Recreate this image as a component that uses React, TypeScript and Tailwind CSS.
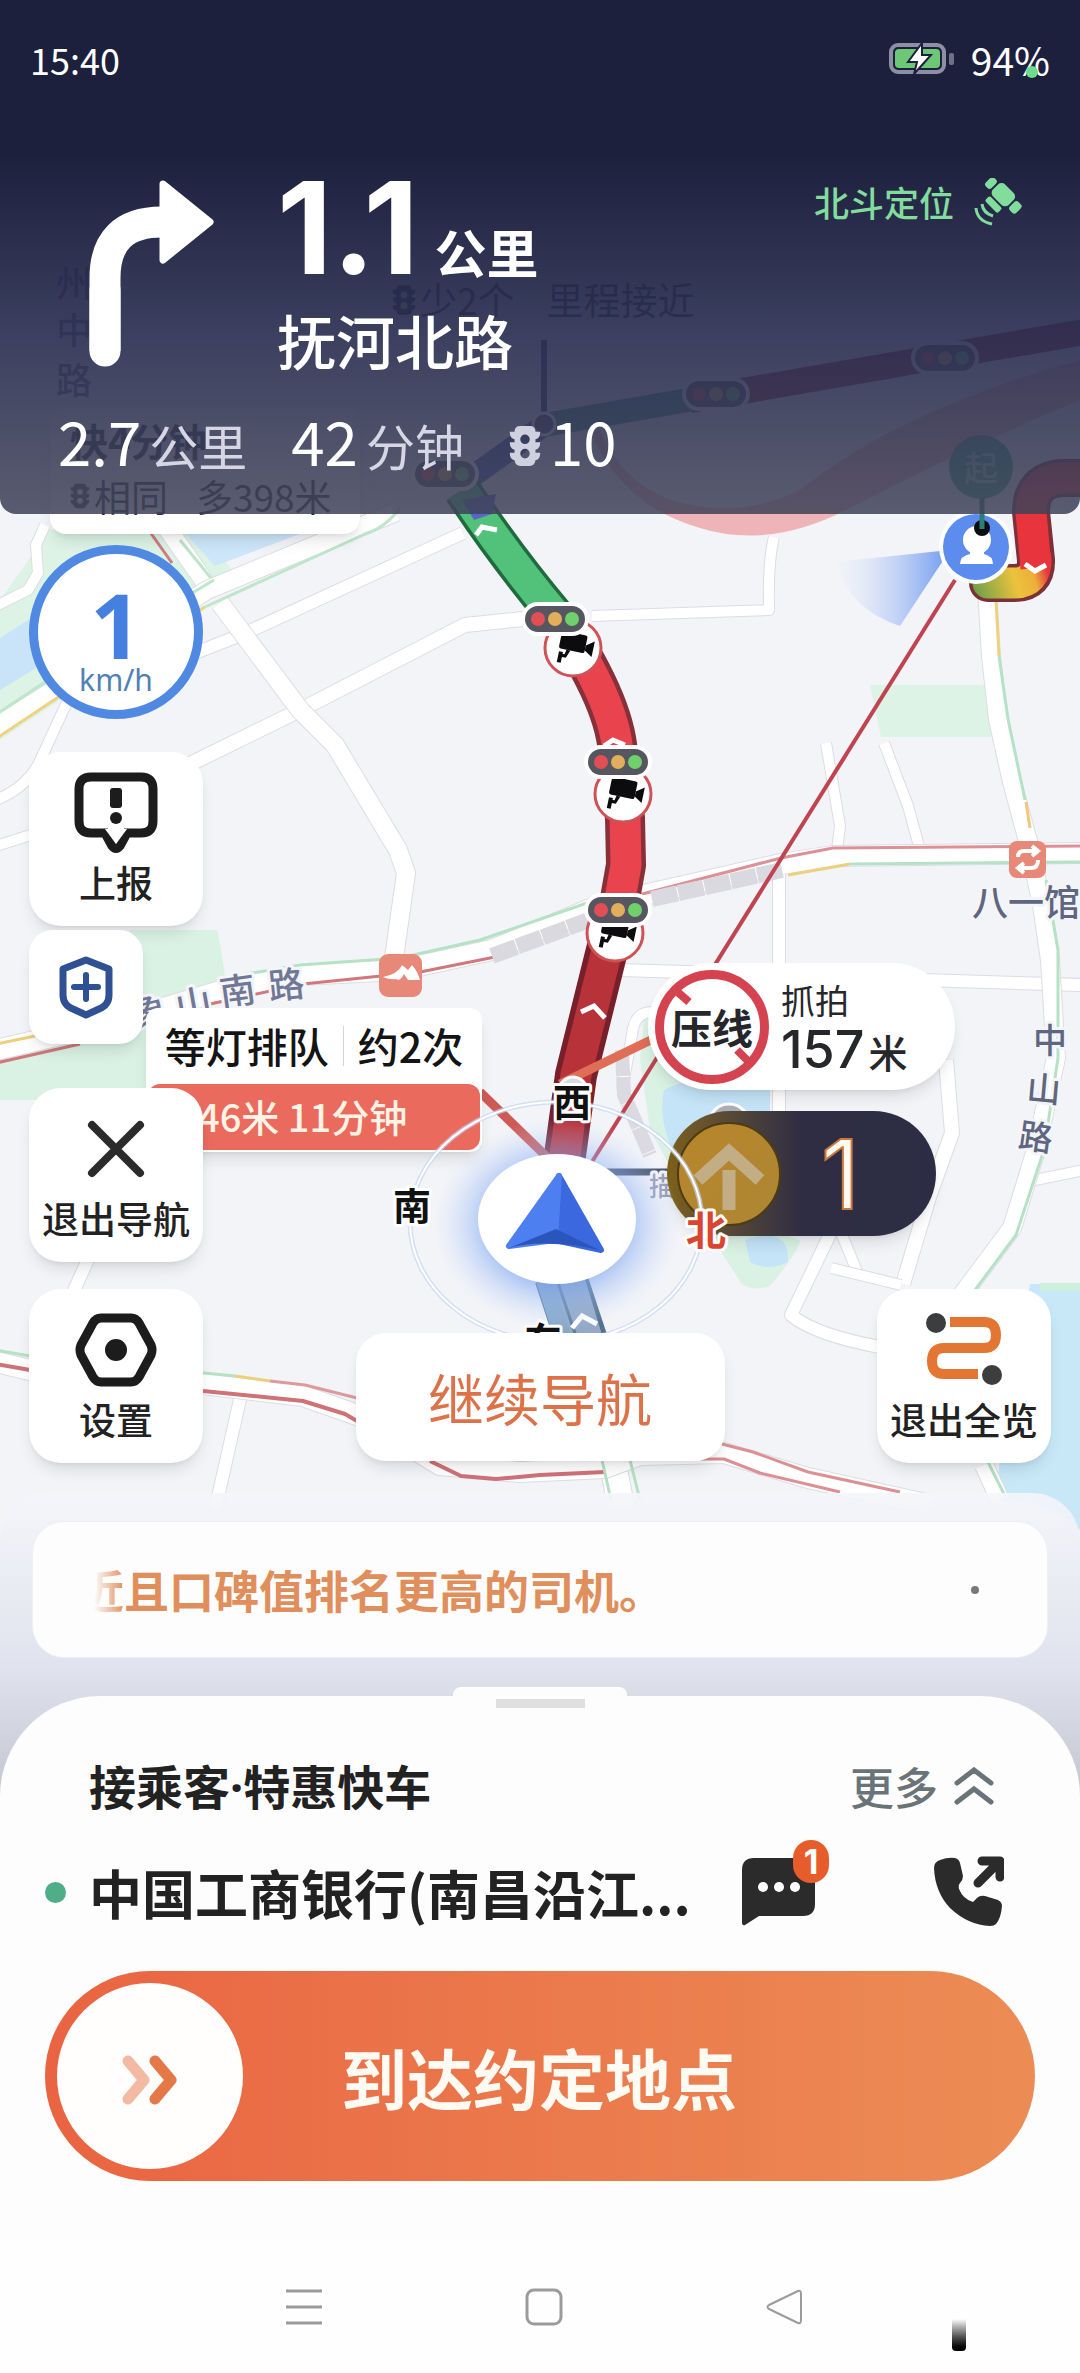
import type { ReactNode } from "react";

type RoadProps = { d: string; width?: number };

type StripeProps = { d: string; color: string; width?: number };

type PointProps = { x: number; y: number };

type LabelProps = {
  x: number;
  y: number;
  children: string;
  size?: number;
  fill?: string;
  halo?: string;
  weight?: number;
  rotate?: number;
};

type MapButtonProps = { label: string; children: ReactNode };

const SIDE_ROADS = [
  { d: "M463 533 L241 635 L190 655", width: 12 },
  { d: "M523 619 L465 625 L300 710 L190 764", width: 14 },
  { d: "M45 525 L36 545 L38 573 L28 590 L-4 606", width: 10 },
  { d: "M68 700 L38 765 Q25 788 -4 800", width: 10 },
  { d: "M40 832 L-4 846", width: 10 },
  { d: "M774 537 Q768 560 769 610 L592 616", width: 10 },
  { d: "M826 743 L840 826 L837 850", width: 10 },
  { d: "M884 743 L908 806 L920 850", width: 10 },
  { d: "M779 870 L779 1115", width: 12 },
  { d: "M620 970 L781 975 L953 981 L1084 985", width: 12 },
  { d: "M946 1060 L952 1133 L929 1197 L903 1284", width: 14 },
  { d: "M832 1230 L791 1315 Q815 1335 880 1347", width: 12 },
  { d: "M840 1230 L858 1274", width: 10 },
  { d: "M831 1268 L901 1285", width: 10 },
  { d: "M1030 1181 L1084 1170", width: 10 },
  { d: "M652 1012 Q634 1012 632 1035 L622 1090", width: 10 },
  { d: "M241 1395 L215 1510", width: 12 },
  { d: "M90 1255 L72 1295", width: 12 },
  { d: "M612 1460 L622 1510", width: 26 },
];

const LIGHT_COLORS = ["#e14f54", "#e3ae5c", "#6fd06c"];

// White carriageway over a slightly wider grey casing
function Road({ d, width = 12 }: RoadProps) {
  return (
    <g fill="none" strokeLinejoin="round">
      <path d={d} stroke="#dcdde3" strokeWidth={width + 2} />
      <path d={d} stroke="#ffffff" strokeWidth={width} />
    </g>
  );
}

function Stripe({ d, color, width = 3 }: StripeProps) {
  return <path d={d} fill="none" stroke={color} strokeWidth={width} strokeLinejoin="round" />;
}

function TrafficLight({ x, y }: PointProps) {
  return (
    <g transform={`translate(${x} ${y})`}>
      <rect x="-34" y="-17" width="68" height="34" rx="17" fill="#fff" />
      <rect x="-30" y="-13" width="60" height="26" rx="13" fill="#55565f" />
      {LIGHT_COLORS.map((color, index) => (
        <circle key={color} cx={-17 + index * 17} cy="0" r="7" fill={color} />
      ))}
    </g>
  );
}

function Camera({ x, y }: PointProps) {
  return (
    <g transform={`translate(${x} ${y})`}>
      <circle r="28" fill="#fff" stroke="#cf5257" strokeWidth="3" />
      <g fill="#0c0c0e" transform="rotate(12)">
        <path d="M-12 -15 H10 Q12 -15 12 -13 V1 Q12 3 10 3 H-12 Q-14 3 -14 1 V-13 Q-14 -15 -12 -15Z" />
        <path d="M12 -5 L20 -11 V5 L12 0Z" />
        <path d="M-2 3 L-5 11 H-9 V17 H-13 V6 H-9 V8 H-7 L-6 3Z" />
      </g>
    </g>
  );
}

function MapLabel({
  x,
  y,
  children,
  size = 36,
  fill = "#5f6680",
  halo = "#f4f5f9",
  weight = 500,
  rotate = 0,
}: LabelProps) {
  return (
    <text
      x={x}
      y={y}
      fontSize={size}
      fontWeight={weight}
      fill={fill}
      stroke={halo}
      strokeWidth="6"
      strokeLinejoin="round"
      paintOrder="stroke"
      textAnchor="middle"
      dominantBaseline="central"
      transform={`rotate(${rotate} ${x} ${y})`}
    >
      {children}
    </text>
  );
}

function BaseMap() {
  return (
    <svg className="h-full w-full" viewBox="0 0 1080 1600" preserveAspectRatio="xMidYMin slice" aria-label="路线地图">
      <defs>
        <linearGradient id="beam" x1="1" x2="0">
          <stop offset="0" stopColor="#6d98ef" />
          <stop offset="1" stopColor="#c9d8f8" stopOpacity="0" />
        </linearGradient>
        <linearGradient id="turn" gradientUnits="userSpaceOnUse" x1="972" y1="583" x2="1044" y2="560">
          <stop offset="0" stopColor="#6fa04a" />
          <stop offset="0.55" stopColor="#ecc23c" />
          <stop offset="0.8" stopColor="#ecb03c" />
          <stop offset="1" stopColor="#e8343c" />
        </linearGradient>
      </defs>
      <rect width="1080" height="1600" fill="#f3f4f8" />

      {/* parks and water */}
      <path d="M50 530 H200 L240 580 L0 740 V600Z" fill="#dcf3e6" />
      <path d="M0 638 L90 580 H180 L0 690Z" fill="#c9e3f8" />
      <path d="M182 530 H310 L215 566Z" fill="#cde6fa" />
      <path d="M130 930 H217 Q222 950 228 1000 L150 1030 V1100 H0 V1050 L130 1020Z" fill="#d9f2e4" />
      <path d="M870 685 H988 L996 737 H881Z" fill="#dcf3e6" />
      <path d="M645 1010 L700 1075 H770 V1230 L800 1240 Q800 1250 770 1286 Q755 1292 742 1284 L700 1220 L650 1130 L640 1060Z" fill="#d9f2e4" />
      <path d="M664 1090 Q700 1070 770 1085 V1180 H690 Q655 1130 664 1090Z" fill="#c5e4f8" />
      <path d="M745 1240 Q790 1225 788 1262 Q768 1272 750 1262Z" fill="#c5e4f8" />
      <path d="M1030 1284 H1080 V1530 Q1050 1500 995 1500 L1000 1460Z" fill="#c8e8f8" />
      <path d="M1040 1287 H1080" stroke="#cdf0dc" strokeWidth="8" />
      <path d="M590 430 Q620 505 700 528 Q770 550 850 508 Q960 450 1080 400 V360 Q900 410 800 490 Q740 520 670 500 Q620 480 600 430Z" fill="#eeb4b8" />

      {/* side roads */}
      {SIDE_ROADS.map((road) => (
        <Road key={road.d} d={road.d} width={road.width} />
      ))}
      <Road d="M165 525 L207 585 M220 603 L300 710 L335 745 L398 850 L406 873 L394 958" width={18} />
      <Stripe d="M150 532 L172 563" color="#d27a7e" />
      <Stripe d="M180 540 L215 583" color="#bfe5cb" />
      <Road d="M396 512 L207 590 L70 680 L-6 728" width={18} />
      <Stripe d="M400 508 Q385 528 365 534 L205 607" color="#bde6cb" />
      <Stripe d="M205 607 L60 696 L-6 740" color="#f0d27e" />
      <Stripe d="M214 580 L60 672 L-6 716" color="#bde6cb" />

      {/* main east-west road */}
      <Road d="M-4 1050 L60 1035 L150 1012 L230 988 L300 975 L400 970 L492 950 L600 905 L781 864 L833 856 L1084 853" width={20} />
      <Stripe d="M240 975 L300 965 L400 958 L480 940 L610 895" color="#b5e2c4" />
      <Stripe d="M-4 1063 L80 1044 M210 1004 L303 984 L420 972 L495 957" color="#d0787c" />
      <Stripe d="M600 905 L781 858 L833 848 L1084 846" color="#dd9096" />
      <Stripe d="M788 875 L850 864" color="#ecd07c" />
      <Stripe d="M850 864 L1084 862" color="#b5e2c4" />
      <Stripe d="M-4 1044 L35 1036" color="#ecd07c" />
      <g strokeDasharray="26 1">
        <Stripe d="M492 956 L600 916" color="#d9d9df" width={16} />
        <Stripe d="M652 899 L782 870" color="#d9d9df" width={16} />
        <Stripe d="M622 1050 L624 1095 L650 1155" color="#dadae0" width={14} />
      </g>

      {/* 中山路 */}
      <Road d="M987 590 L991 656 L998 719 L1012 782 L1029 845 L1042 905 L1050 960 L1056 1058 L1036 1150 L1012 1228 L962 1295 M984 1465 L1000 1500" width={18} />
      <Stripe d="M996 600 L999 656" color="#efd27e" />
      <Stripe d="M999 656 L1008 719 L1025 800 M1046 880 L1058 950 L1058 1058 L1044 1150 L1016 1235 L975 1290 M988 1462 L1005 1496" color="#b5e2c4" />
      <Stripe d="M1026 802 L1030 828" color="#efc77e" />

      {/* southern ring road */}
      <Road d="M-4 1362 L30 1370 L203 1384 L303 1396 L360 1416 L440 1465 L520 1472 L605 1468 L640 1455 L724 1453 L808 1478 L930 1505" width={20} />
      <Stripe d="M-4 1350 L30 1356 L235 1376" color="#b5e2c4" />
      <Stripe d="M235 1376 L270 1381" color="#ecd07c" />
      <Stripe d="M270 1381 L305 1385 L357 1398" color="#dd9a9c" />
      <Stripe d="M-4 1364 L30 1370 M203 1391 L303 1401 L345 1414 L357 1421 M430 1461 L461 1476 L496 1479 L540 1475 L605 1472" color="#cf7277" width={4} />
      <Stripe d="M700 1459 L724 1459 L760 1473 L840 1492 M722 1444 L753 1452 L808 1472 L900 1492" color="#dd8f94" />
      <Stripe d="M602 1460 L611 1500 M630 1460 L640 1500" color="#b5e2c4" />

      {/* far part of the route */}
      <Stripe d="M544 340 V420" color="#2d3268" width={6} />
      <Stripe d="M690 400 L1084 332" color="#8e1f35" width={26} />
      <Stripe d="M544 425 L700 398" color="#3f8a80" width={24} />
      <Stripe d="M546 424 L470 478" color="#3c56b0" width={22} />
      <TrafficLight x={716} y={394} />
      <TrafficLight x={945} y={358} />
      <circle cx="544" cy="424" r="11" fill="#4b4e66" stroke="#fff" strokeWidth="3" />

      {/* congested stretch ahead */}
      <g fill="none" strokeLinejoin="round">
        <path d="M462 490 Q505 555 556 616" stroke="#1f6b3d" strokeWidth="38" />
        <path d="M462 490 Q505 555 556 616" stroke="#52c27b" strokeWidth="31" />
        <path d="M560 620 Q620 710 618 762 L625 818 L626 865 L618 910" stroke="#87303a" strokeWidth="40" />
        <path d="M560 620 Q620 710 618 762 L625 818 L626 865 L618 910" stroke="#e9434d" strokeWidth="31" />
        <path d="M612 930 L576 1075 L563 1170" stroke="#77202c" strokeWidth="42" />
        <path d="M612 930 L576 1075 L563 1170" stroke="#b8323a" strokeWidth="31" />
        <path d="M560 1275 L588 1360" stroke="#54718f" strokeWidth="52" />
        <path d="M557 1275 L584 1360" stroke="#86a8c9" strokeWidth="44" />
        <path d="M568 1275 L594 1360" stroke="#93a9c5" strokeWidth="30" />
        <path d="M557 1280 L584 1360" stroke="#5d7f9f" strokeWidth="3" />
        <path d="M1084 478 H1062 Q1031 480 1031 512 L1036 560 Q1037 583 1014 583 H988" stroke="#7a3138" strokeWidth="38" strokeLinecap="round" />
        <path d="M1036 558 Q1037 583 1014 583 H988" stroke="url(#turn)" strokeWidth="31" strokeLinecap="round" />
        <path d="M1084 478 H1062 Q1031 480 1031 512 L1036 568" stroke="#e8343c" strokeWidth="31" />
      </g>
      <g fill="none" stroke="#fff" strokeWidth="5" strokeLinejoin="miter">
        <path d="M476 535 L482 527 L497 530" />
        <path d="M604 746 L613 740 L625 745" />
        <path d="M581 1012 L594 1006 L605 1018" />
        <path d="M572 1328 L582 1316 L597 1324" />
        <path d="M1025 564 L1035 571 L1046 565" />
      </g>
      <TrafficLight x={445} y={474} />
      <path d="M462 500 L496 494 L492 514 L474 520Z" fill="#5866c8" />

      <path d="M560 1084 L655 1038" stroke="#e06d55" strokeWidth="9" />
      <path d="M480 1092 L550 1160" stroke="#cf5a55" strokeWidth="9" />
      <path d="M600 1172 H680" stroke="#4b5570" strokeWidth="7" />
      <path d="M955 580 L590 1165" stroke="#c04450" strokeWidth="4" />
      <circle cx="573" cy="1091" r="14" fill="#d8dbe4" stroke="#fff" strokeWidth="3" />
      <circle cx="729" cy="1124" r="20" fill="#a9aeb9" stroke="#fff" strokeWidth="3" />

      <Camera x={573} y={648} />
      <Camera x={623} y={794} />
      <Camera x={615} y={933} />
      <TrafficLight x={555} y={619} />
      <TrafficLight x={618} y={762} />
      <TrafficLight x={618} y={910} />

      {/* passenger */}
      <path d="M950 550 L835 562 Q850 610 900 626Z" fill="url(#beam)" />
      <circle cx="981" cy="467" r="32" fill="#3fa58c" />
      <MapLabel x={981} y={466} size={34} fill="#9fd3c4" halo="#3fa58c">
        起
      </MapLabel>
      <circle cx="976" cy="547" r="37" fill="#fff" />
      <circle cx="976" cy="547" r="33" fill="#5b8cee" />
      <circle cx="977" cy="540" r="14" fill="#fff" />
      <path d="M970 548 H984 V554 Q993 556 993 564 H960 Q960 556 970 554Z" fill="#fff" />
      <circle cx="982" cy="528" r="8" fill="#0c0d10" />
      <path d="M982 498 V529" stroke="#2c7f77" strokeWidth="5" />

      {/* places and street names */}
      <rect x="379" y="954" width="43" height="43" rx="9" fill="#e88878" />
      <path d="M383 977 Q398 974 402 965 L408 970 L412 965 Q418 972 420 980 H408 L404 974 Q400 982 396 979 Q390 980 383 977Z" fill="#fff" />
      <rect x="1009" y="841" width="37" height="37" rx="8" fill="#e88878" />
      <path d="M1018 857 Q1018 851 1024 851 H1036 M1032 846 L1038 851 L1032 856 M1038 860 Q1038 868 1031 868 H1019 M1024 863 L1018 868 L1024 873" fill="none" stroke="#fff" strokeWidth="4" />
      <MapLabel x={1026} y={900}>八一馆</MapLabel>
      <MapLabel x={1050} y={1038} size={34}>中</MapLabel>
      <MapLabel x={1044} y={1087} size={34} rotate={5}>山</MapLabel>
      <MapLabel x={1036} y={1135} size={34} rotate={8}>路</MapLabel>
      <MapLabel x={148} y={1009} rotate={-14} fill="#707896">象</MapLabel>
      <MapLabel x={193} y={1001} rotate={-10} fill="#707896">山</MapLabel>
      <MapLabel x={237} y={988} rotate={-8} fill="#707896">南</MapLabel>
      <MapLabel x={286} y={982} rotate={-6} fill="#707896">路</MapLabel>
      <MapLabel x={662} y={1184} size={26} fill="#9a9db5">描</MapLabel>
      <MapLabel x={74} y={281}>州</MapLabel>
      <MapLabel x={74} y={328}>中</MapLabel>
      <MapLabel x={74} y={378}>路</MapLabel>
    </svg>
  );
}

function Compass() {
  return (
    <svg className="h-full w-full" viewBox="0 0 1080 1600" preserveAspectRatio="xMidYMin slice" aria-label="指南针">
      <defs>
        <radialGradient id="halo">
          <stop offset="0.5" stopColor="#6f9cf0" stopOpacity="0.7" />
          <stop offset="1" stopColor="#c7d9fa" stopOpacity="0" />
        </radialGradient>
      </defs>
      <ellipse cx="557" cy="1224" rx="124" ry="106" fill="url(#halo)" />
      <ellipse cx="556" cy="1222" rx="146" ry="120" fill="none" stroke="#c3d6f3" strokeWidth="5" opacity="0.7" />
      <ellipse cx="556" cy="1222" rx="146" ry="120" fill="none" stroke="#fff" strokeWidth="2" />
      <ellipse cx="557" cy="1219" rx="79" ry="65" fill="#fff" />
      <g strokeLinejoin="round" strokeWidth="6">
        <path d="M559 1176 L601 1250 L555 1240Z" fill="#3b68de" stroke="#3b68de" />
        <path d="M559 1176 L509 1246 L555 1240Z" fill="#4d7ff0" stroke="#4d7ff0" />
      </g>
      <path d="M556 1229 L601 1251 Q578 1244 554 1244 Q530 1242 509 1248Z" fill="#2a55bd" />
      <MapLabel x={572} y={1099} size={38} weight={700} fill="#111" halo="#fff">西</MapLabel>
      <MapLabel x={412} y={1203} size={38} weight={700} fill="#111" halo="#fff">南</MapLabel>
      <MapLabel x={543} y={1338} size={38} weight={700} fill="#111" halo="#fff">东</MapLabel>
      <MapLabel x={706} y={1228} size={40} weight={700} fill="#d9452f" halo="#fff">北</MapLabel>
    </svg>
  );
}

function SignalIcon({ className }: { className?: string }) {
  return (
    <svg className={className} viewBox="0 0 34 42" fill="currentColor" aria-hidden="true">
      <path
        fillRule="evenodd"
        d="M12 0 H22 Q28 0 28 6 H33 Q33 13 28 14 V17 H33 Q33 24 28 25 V28 H33 Q33 35 28 36 Q27 42 22 42 H12 Q7 42 6 36 Q1 35 1 28 H6 V25 Q1 24 1 17 H6 V14 Q1 13 1 6 H6 Q6 0 12 0Z M17 9 A5 5 0 1 0 17 19 A5 5 0 1 0 17 9Z M17 24 A5 5 0 1 0 17 34 A5 5 0 1 0 17 24Z"
      />
    </svg>
  );
}

function RouteNotes() {
  return (
    <>
      <div className="absolute top-[408px] left-[50px] w-[310px] rounded-2xl bg-white pt-1 pb-2.5 pl-5 text-[#2b2d3a] shadow-lg">
        <p className="text-[38px] leading-[56px] font-bold">快4分钟</p>
        <p className="flex items-center text-[37px] leading-[56px]">
          <SignalIcon className="mr-1 h-9 w-5 text-[#4a4a52]" />
          相同<span className="ml-7">多398米</span>
        </p>
      </div>
      <div className="absolute top-[272px] left-[392px] flex h-14 items-center text-[37px] text-[#2b2d3a]">
        <SignalIcon className="mr-1 h-9 w-6 text-[#2b2d3a]" />
        少2个<span className="ml-8">里程接近</span>
      </div>
    </>
  );
}

function MapPins() {
  return (
    <>
      <div className="absolute top-[1008px] left-[146px] w-[336px] rounded-xl bg-white shadow-lg">
        <p className="flex h-[76px] items-center justify-center text-[41px] font-medium text-[#141414]">
          等灯排队
          <span className="mx-3.5 h-10 w-px bg-gray-300" />
          约2次
        </p>
        <p className="mx-0.5 mb-0.5 h-[66px] rounded-xl bg-[#ea6a5e] pl-[50px] text-[38px] leading-[64px] font-medium text-[#fff3e6]">
          46米 11分钟
        </p>
      </div>

      <div className="absolute top-[963px] left-[648px] flex h-[127px] w-[307px] items-center rounded-full bg-white pl-[7px] shadow-lg">
        <div className="flex size-[114px] items-center justify-center rounded-full border-[9px] border-[#d4434f] text-[41px] font-bold text-[#26272b]">
          <svg className="absolute left-[7px] size-[114px]" viewBox="0 0 114 114" stroke="#d4434f" strokeWidth="8" aria-hidden="true">
            <path d="M18 18 L34 32 M82 80 L97 95" />
          </svg>
          <span className="relative whitespace-nowrap">压线</span>
        </div>
        <div className="ml-3 text-[#26272b]">
          <p className="text-[34px] leading-[48px]">抓拍</p>
          <p className="flex items-baseline gap-1 text-[39px] leading-[52px] font-medium">
            <span className="font-[Inter] text-[52px]">157</span>米
          </p>
        </div>
      </div>

      <div className="absolute top-[1111px] left-[667px] flex h-[125px] w-[269px] items-center rounded-full bg-linear-to-r from-[#7d6016] via-[#2f2d42] via-50% to-[#2c2d45] pl-2.5 shadow-lg">
        <div className="flex size-[104px] items-center justify-center rounded-full border-2 border-[#4d3b12] bg-linear-to-br from-[#b8862a] to-[#ad8634]">
          <svg className="size-[72px]" viewBox="0 0 72 72" fill="none" stroke="#c3ad85" strokeWidth="13" aria-hidden="true">
            <path d="M5 42 L36 14 L67 42 M36 32 V72" />
          </svg>
        </div>
        <span className="ml-10 font-[Inter] text-[96px] leading-none text-[#fffaf0] [-webkit-text-stroke:2px_#c9783f]">1</span>
      </div>
    </>
  );
}

function StatusBar() {
  return (
    <div className="flex h-[118px] items-center justify-between px-[30px] text-[36px]">
      <span>15:40</span>
      <div className="relative flex items-center gap-4 text-[39px]">
        <svg className="h-[32px] w-[66px]" viewBox="0 0 66 32" aria-label="充电中">
          <rect x="2" y="2" width="53" height="27" rx="7" fill="none" stroke="#8d8fa6" strokeWidth="4" />
          <rect x="6" y="6" width="45" height="19" rx="4" fill="#6cc874" />
          <rect x="60" y="10" width="5" height="12" rx="2" fill="#6f7188" />
          <path d="M33 0 L19 19 H28 L25 31 L42 12 H33Z" fill="#fff" stroke="#1d213e" strokeWidth="2" />
        </svg>
        <span>94%</span>
        <span className="absolute right-3 bottom-2.5 size-3 rounded-full bg-[#6fdc8c]" />
      </div>
    </div>
  );
}

function GuidanceHeader() {
  return (
    <header className="relative h-[514px] rounded-b-2xl bg-linear-to-b from-[#1c203d] from-30% via-[#2c3052]/92 via-65% to-[#404359]/86 text-white">
      <StatusBar />
      <div className="flex items-start px-[58px] pt-[52px]">
        <svg className="mt-2 h-[192px] w-[160px]" viewBox="58 178 160 192" fill="none" aria-label="右转">
          <path d="M105 351 V278 Q105 222 162 222" stroke="#fff" strokeWidth="31" />
          <path d="M105 290 V351" stroke="#fff" strokeWidth="31" strokeLinecap="round" />
          <path d="M163 184 L210 222 L163 260Z" fill="#fff" stroke="#fff" strokeWidth="7" strokeLinejoin="round" />
        </svg>
        <div className="ml-[59px] flex-1">
          <p className="flex items-baseline gap-4 text-[52px] leading-[116px] font-bold">
            <span className="font-[Inter] text-[128px]">1.1</span>公里
          </p>
          <p className="text-[59px] leading-[60px] font-medium">抚河北路</p>
        </div>
        <p className="mt-1.5 flex items-center gap-5 text-[35px] font-medium text-[#82dc9c]">
          北斗定位
          <svg className="size-[48px]" viewBox="0 0 48 48" fill="currentColor" aria-hidden="true">
            <g transform="rotate(45 29 17)">
              <rect x="18" y="8" width="22" height="17" rx="5" />
              <rect x="8" y="11" width="8" height="12" rx="3" />
              <rect x="42" y="11" width="9" height="12" rx="3" />
              <rect x="20" y="27" width="18" height="7" rx="2" />
            </g>
            <path d="M8 26 Q9 35 19 38 M2 30 Q3 43 18 46" fill="none" stroke="currentColor" strokeWidth="3" />
          </svg>
        </p>
      </div>
      <p className="flex items-baseline px-[58px] pt-7 text-[49px] leading-[84px] text-[#d6d6e4]">
        <span className="mr-2 text-[60px] text-white">2.7</span>公里
        <span className="mr-2 ml-11 text-[60px] text-white">42</span>分钟
        <SignalIcon className="ml-11 h-10 w-[34px] text-[#d0d1de]" />
        <span className="ml-2 text-[60px] text-white">10</span>
      </p>
    </header>
  );
}

function MapButton({ label, children }: MapButtonProps) {
  return (
    <button
      type="button"
      className="flex size-[174px] flex-col items-center justify-between rounded-[32px] bg-white pt-5 pb-[18px] text-[37px] leading-[52px] font-medium text-[#222] shadow-lg"
    >
      {children}
      {label}
    </button>
  );
}

function MapControls() {
  return (
    <div className="relative flex items-end justify-between px-[29px] pt-[31px] pb-[30px]">
      <div className="flex flex-col">
        <div className="flex size-[174px] flex-col items-center rounded-full border-[9px] border-[#5089e2] bg-white pt-8">
          <span className="font-['Open_Sans'] text-[90px] leading-[76px] font-bold text-[#4580e0]">1</span>
          <span className="font-['Noto_Sans'] text-[30px] leading-9 text-[#4f80b8]">km/h</span>
        </div>
        <div className="mt-[33px]">
          <MapButton label="上报">
            <svg className="h-[82px] w-[84px]" viewBox="0 0 84 82" fill="none" aria-hidden="true">
              <path
                d="M17 5 H67 Q79 5 79 17 V49 Q79 61 67 61 H53 L46 74 Q42 79 38 74 L31 61 H17 Q5 61 5 49 V17 Q5 5 17 5Z"
                stroke="#1c1c1c"
                strokeWidth="9"
              />
              <path d="M31 57 H53 L42 72Z" fill="#fff" />
              <rect x="36" y="16" width="12" height="20" rx="3" fill="#1c1c1c" />
              <circle cx="42" cy="46" r="6" fill="#1c1c1c" />
            </svg>
          </MapButton>
        </div>
        <button
          type="button"
          aria-label="安全中心"
          className="mt-1 flex size-[114px] items-center justify-center rounded-3xl bg-white shadow-lg"
        >
          <svg className="h-[64px] w-[56px]" viewBox="0 0 56 64" fill="none" stroke="#2f5193" aria-hidden="true">
            <path d="M28 5 L51 14 V40 Q51 50 41 54 L28 60 L15 54 Q5 50 5 40 V14Z" strokeWidth="7" strokeLinejoin="round" />
            <path d="M28 20 V44 M16 32 H40" strokeWidth="6" strokeLinecap="round" />
          </svg>
        </button>
        <div className="mt-11">
          <MapButton label="退出导航">
            <svg className="mt-3 h-[58px] w-[58px]" viewBox="0 0 58 58" stroke="#2b2b2b" strokeWidth="8" strokeLinecap="round" aria-hidden="true">
              <path d="M5 5 L53 53 M53 5 L5 53" />
            </svg>
          </MapButton>
        </div>
        <div className="mt-[27px]">
          <MapButton label="设置">
            <svg className="mt-1 h-[74px] w-[82px]" viewBox="0 0 82 74" fill="none" aria-hidden="true">
              <path
                d="M26 5 H56 Q61 5 64 10 L76 32 Q78 37 76 42 L64 64 Q61 69 56 69 H26 Q21 69 18 64 L6 42 Q4 37 6 32 L18 10 Q21 5 26 5Z"
                stroke="#1c1c1c"
                strokeWidth="9"
              />
              <circle cx="41" cy="37" r="11" fill="#1c1c1c" />
            </svg>
          </MapButton>
        </div>
      </div>
      <button type="button" className="mb-0.5 h-[128px] w-[369px] rounded-[30px] bg-white text-[56px] text-[#dd7249] shadow-lg">
        继续导航
      </button>
      <MapButton label="退出全览">
        <svg className="mt-1 h-[72px] w-[76px]" viewBox="0 0 76 72" fill="none" aria-hidden="true">
          <path d="M24 9 H58 Q70 9 70 22 Q70 35 58 35 H18 Q6 35 6 48 Q6 61 18 61 H52" stroke="#e27632" strokeWidth="10" />
          <circle cx="10" cy="10" r="10" fill="#3b3d3f" />
          <circle cx="66" cy="62" r="10" fill="#3b3d3f" />
        </svg>
      </MapButton>
    </div>
  );
}

function Ticker() {
  return (
    <div className="mx-8 flex h-[137px] items-center justify-between rounded-[32px] border border-[#eef0f4] bg-[#fdfdfd] pr-[68px] pl-[61px]">
      <p className="flex overflow-hidden text-[45px] font-bold whitespace-nowrap text-[#e08f5c]">
        <span className="flex w-[30px] justify-end overflow-hidden mask-l-from-0%">近</span>
        且口碑值排名更高的司机。
      </p>
      <span className="size-2 rounded-full bg-[#77797d]" />
    </div>
  );
}

function OrderSheet() {
  return (
    <>
      <div className="mx-auto mt-[29px] h-[9px] w-[174px] rounded-t-lg bg-[#fdfdfd]" />
      <div className="rounded-t-[100px] bg-[#fdfdfd] pb-[59px]">
        <div className="mx-auto h-3 w-[89px] border-b-[9px] border-[#dfdfdf]" />
        <div className="mt-11 flex h-[68px] items-center justify-between pr-[86px] pl-[89px]">
          <h2 className="text-[47px] font-bold text-[#222]">
            接乘客<span className="font-['Noto_Sans']">·</span>特惠快车
          </h2>
          <button type="button" className="flex items-center gap-4 text-[44px] font-medium text-[#6a7478]">
            更多
            <svg className="h-[38px] w-[40px]" viewBox="0 0 40 38" fill="none" stroke="currentColor" strokeWidth="5" strokeLinecap="round" aria-hidden="true">
              <path d="M3 16 L20 3 L37 16 M3 35 L20 22 L37 35" />
            </svg>
          </button>
        </div>
        <div className="mt-8 flex h-[80px] items-center pr-[76px] pl-[45px]">
          <span className="size-[21px] shrink-0 rounded-full bg-[#4fae88]" />
          <p className="ml-[23px] min-w-0 flex-1 text-[53px] leading-[80px] font-bold whitespace-nowrap text-[#222]">
            中国工商银行(南昌沿江...
          </p>
          <button type="button" aria-label="消息" className="relative">
            <svg className="h-[68px] w-[76px]" viewBox="0 0 76 68" fill="#2b2b2b" aria-hidden="true">
              <path d="M13 0 H62 Q74 0 74 12 V46 Q74 58 62 58 H18 L4 67 Q1 68 1 64 V12 Q1 0 13 0Z" />
              <g fill="#fff">
                <circle cx="22" cy="29" r="5" />
                <circle cx="38" cy="29" r="5" />
                <circle cx="54" cy="29" r="5" />
              </g>
            </svg>
            <span className="absolute -top-[18px] -right-3 flex h-[43px] w-[36px] items-center justify-center rounded-full bg-[#e65c2b] font-[Inter] text-[34px] font-bold text-white">
              1
            </span>
          </button>
          <button type="button" aria-label="电话" className="ml-[115px]">
            <svg className="h-[72px] w-[72px]" viewBox="0 0 72 72" fill="#2b2b2b" aria-hidden="true">
              <path d="M8 4 Q16 1 23 2 Q27 3 28 7 L31 20 Q31 24 28 27 Q26 29 27 33 Q31 43 41 46 L45 42 Q48 39 53 40 L66 44 Q70 46 70 50 Q69 62 64 68 Q62 70 58 70 Q36 69 18 52 Q3 36 2 12 Q2 6 8 4Z" />
              <path d="M46 27 L65 8 M50 5 H68 V21" fill="none" stroke="#2b2b2b" strokeWidth="9" strokeLinecap="round" strokeLinejoin="round" />
            </svg>
          </button>
        </div>
        <div className="mx-[45px] mt-[39px]">
          <button
            type="button"
            className="flex h-[210px] w-full items-center rounded-full bg-linear-to-r from-[#e96442] to-[#ec8c55] pl-3 text-[66px] font-bold text-[#fffaf2]"
          >
            <span className="flex size-[186px] items-center justify-center rounded-full bg-[#fffefd]">
              <svg className="mt-2 h-[50px] w-[56px]" viewBox="0 0 56 50" fill="none" strokeWidth="11" strokeLinecap="round" strokeLinejoin="round" aria-hidden="true">
                <path d="M6 6 L22 25 L6 44" stroke="#f3b9a2" />
                <path d="M33 6 L49 25 L33 44" stroke="#e57848" />
              </svg>
            </span>
            <span className="ml-[98px]">到达约定地点</span>
          </button>
        </div>
      </div>
    </>
  );
}

function SystemNav() {
  return (
    <nav className="relative flex h-[133px] justify-center gap-[202px] bg-[#fefefe] pt-12 pl-2">
      <button type="button" aria-label="最近任务" className="h-10 w-[38px]">
        <svg viewBox="0 0 38 40" stroke="#9b9b9b" strokeWidth="3" aria-hidden="true">
          <path d="M1 3 H37 M1 19 H37 M1 35 H37" />
        </svg>
      </button>
      <button type="button" aria-label="主屏幕" className="h-10 w-[38px]">
        <svg viewBox="0 0 38 40" fill="none" stroke="#9b9b9b" strokeWidth="3" aria-hidden="true">
          <rect x="2" y="2" width="34" height="34" rx="7" />
        </svg>
      </button>
      <button type="button" aria-label="返回" className="h-10 w-[38px]">
        <svg viewBox="0 0 38 40" fill="none" stroke="#9b9b9b" strokeWidth="2" strokeLinejoin="round" aria-hidden="true">
          <path d="M33 3 Q36 2 36 6 V32 Q36 36 33 35 L4 21 Q1 19 4 17Z" />
        </svg>
      </button>
      <span className="absolute right-[114px] bottom-[22px] h-8 w-3.5 rounded-b bg-linear-to-b from-white to-black" />
    </nav>
  );
}

export default function App() {
  return (
    <main className="relative min-h-screen overflow-hidden bg-[#fefefe] font-['Noto_Sans_CJK_SC',sans-serif]">
      <div className="absolute inset-x-0 top-0 h-[1600px]">
        <BaseMap />
        <RouteNotes />
        <MapPins />
        <div className="absolute inset-0">
          <Compass />
        </div>
      </div>
      <GuidanceHeader />
      <MapControls />
      <section className="relative rounded-t-[48px] bg-linear-to-b from-[#f5f6fa]/90 from-0% via-[#dfe2ed] via-[180px] to-[#c6c9d2] to-[290px] pt-7">
        <Ticker />
        <OrderSheet />
      </section>
      <SystemNav />
    </main>
  );
}
